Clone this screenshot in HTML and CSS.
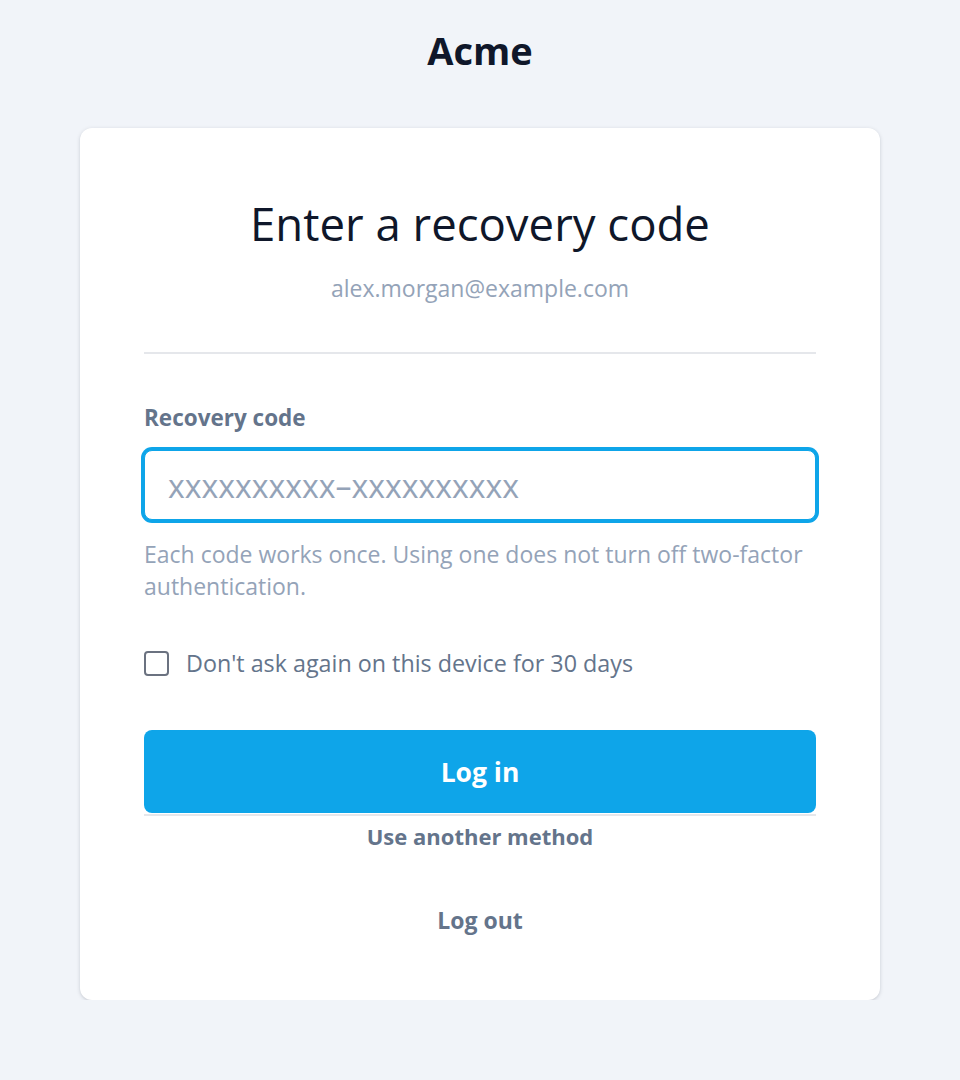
FILE: index.html
```html
<!DOCTYPE html>
<html lang="en">
<head>
<meta charset="utf-8">
<title>Acme – Enter a recovery code</title>
<link rel="stylesheet" href="styles.css">
</head>
<body>
<header class="brand">Acme</header>
<main class="card">
  <h1 class="title">Enter a recovery code</h1>
  <p class="email">alex.morgan@example.com</p>
  <div class="divider"></div>
  <form class="form">
    <label class="label" for="code">Recovery code</label>
    <input class="input" id="code" type="text" placeholder="xxxxxxxxxx–xxxxxxxxxx">
    <p class="help">Each code works once. Using one does not turn off two-factor authentication.</p>
    <label class="check">
      <span class="box"></span>
      <span class="check-text">Don't ask again on this device for 30 days</span>
    </label>
    <button class="btn" type="button">Log in</button>
    <div class="rule"></div>
    <a class="link link-method" href="#">Use another method</a>
    <a class="link link-logout" href="#">Log out</a>
  </form>
</main>
</body>
</html>
```
FILE: styles.css
```css
* { box-sizing: border-box; }
html, body { margin: 0; padding: 0; }
body {
  background: #f1f4f9;
  font-family: "Open Sans", "Noto Sans", "Liberation Sans", sans-serif;
  color: #0f172a;
}
.brand {
  padding-top: 28px;
  text-align: center;
  font-size: 38px;
  line-height: 44px;
  font-weight: 700;
  color: #0f172a;
}
.card {
  width: 800px;
  margin: 56px auto 0;
  background: #fff;
  border-radius: 12px;
  box-shadow: 0 1px 4px rgba(15, 23, 42, 0.14), 0 1px 2px rgba(15, 23, 42, 0.06);
  padding: 70px 64px 66px;
}
.title {
  margin: 0;
  text-align: center;
  font-size: 45.5px;
  line-height: 50px;
  font-weight: 400;
  color: #0f172a;
}
.email {
  margin: 26px 0 0;
  text-align: center;
  font-size: 23px;
  line-height: 28px;
  color: #94a3b8;
}
.divider {
  margin-top: 50px;
  height: 2px;
  background: #e5e7eb;
}
.form { display: flex; flex-direction: column; }
.label {
  margin-top: 50px;
  font-size: 22.5px;
  line-height: 28px;
  font-weight: 700;
  color: #64748b;
}
.input {
  margin-top: 18px;
  height: 70px;
  width: 100%;
  border: 1px solid #0ea5e9;
  box-shadow: 0 0 0 3px #0ea5e9;
  border-radius: 8px;
  padding: 0 23px;
  font-family: inherit;
  font-size: 32px;
  color: #0f172a;
  outline: none;
  background: #fff;
}
.input::placeholder { color: #94a3b8; }
.help {
  margin: 18px 0 0;
  font-size: 23px;
  line-height: 32px;
  color: #94a3b8;
}
.check {
  margin-top: 47px;
  display: flex;
  align-items: center;
  gap: 17px;
  height: 28px;
  font-size: 23.3px;
  color: #64748b;
}
.box {
  width: 25px;
  height: 25px;
  border: 2px solid #6b7280;
  border-radius: 4px;
  flex: none;
}
.btn {
  margin-top: 53px;
  height: 83px;
  border: 0;
  border-radius: 8px;
  background: #0ea5e9;
  color: #fff;
  font-family: inherit;
  font-size: 26.5px;
  font-weight: 700;
}
.rule {
  margin-top: 1px;
  height: 2px;
  background: #e5e7eb;
}
.link {
  text-align: center;
  font-size: 22px;
  line-height: 28px;
  font-weight: 700;
  color: #64748b;
  text-decoration: none;
}
.link-method { margin-top: 6px; }
.link-logout { margin-top: 56px; font-size: 23px; }
```
